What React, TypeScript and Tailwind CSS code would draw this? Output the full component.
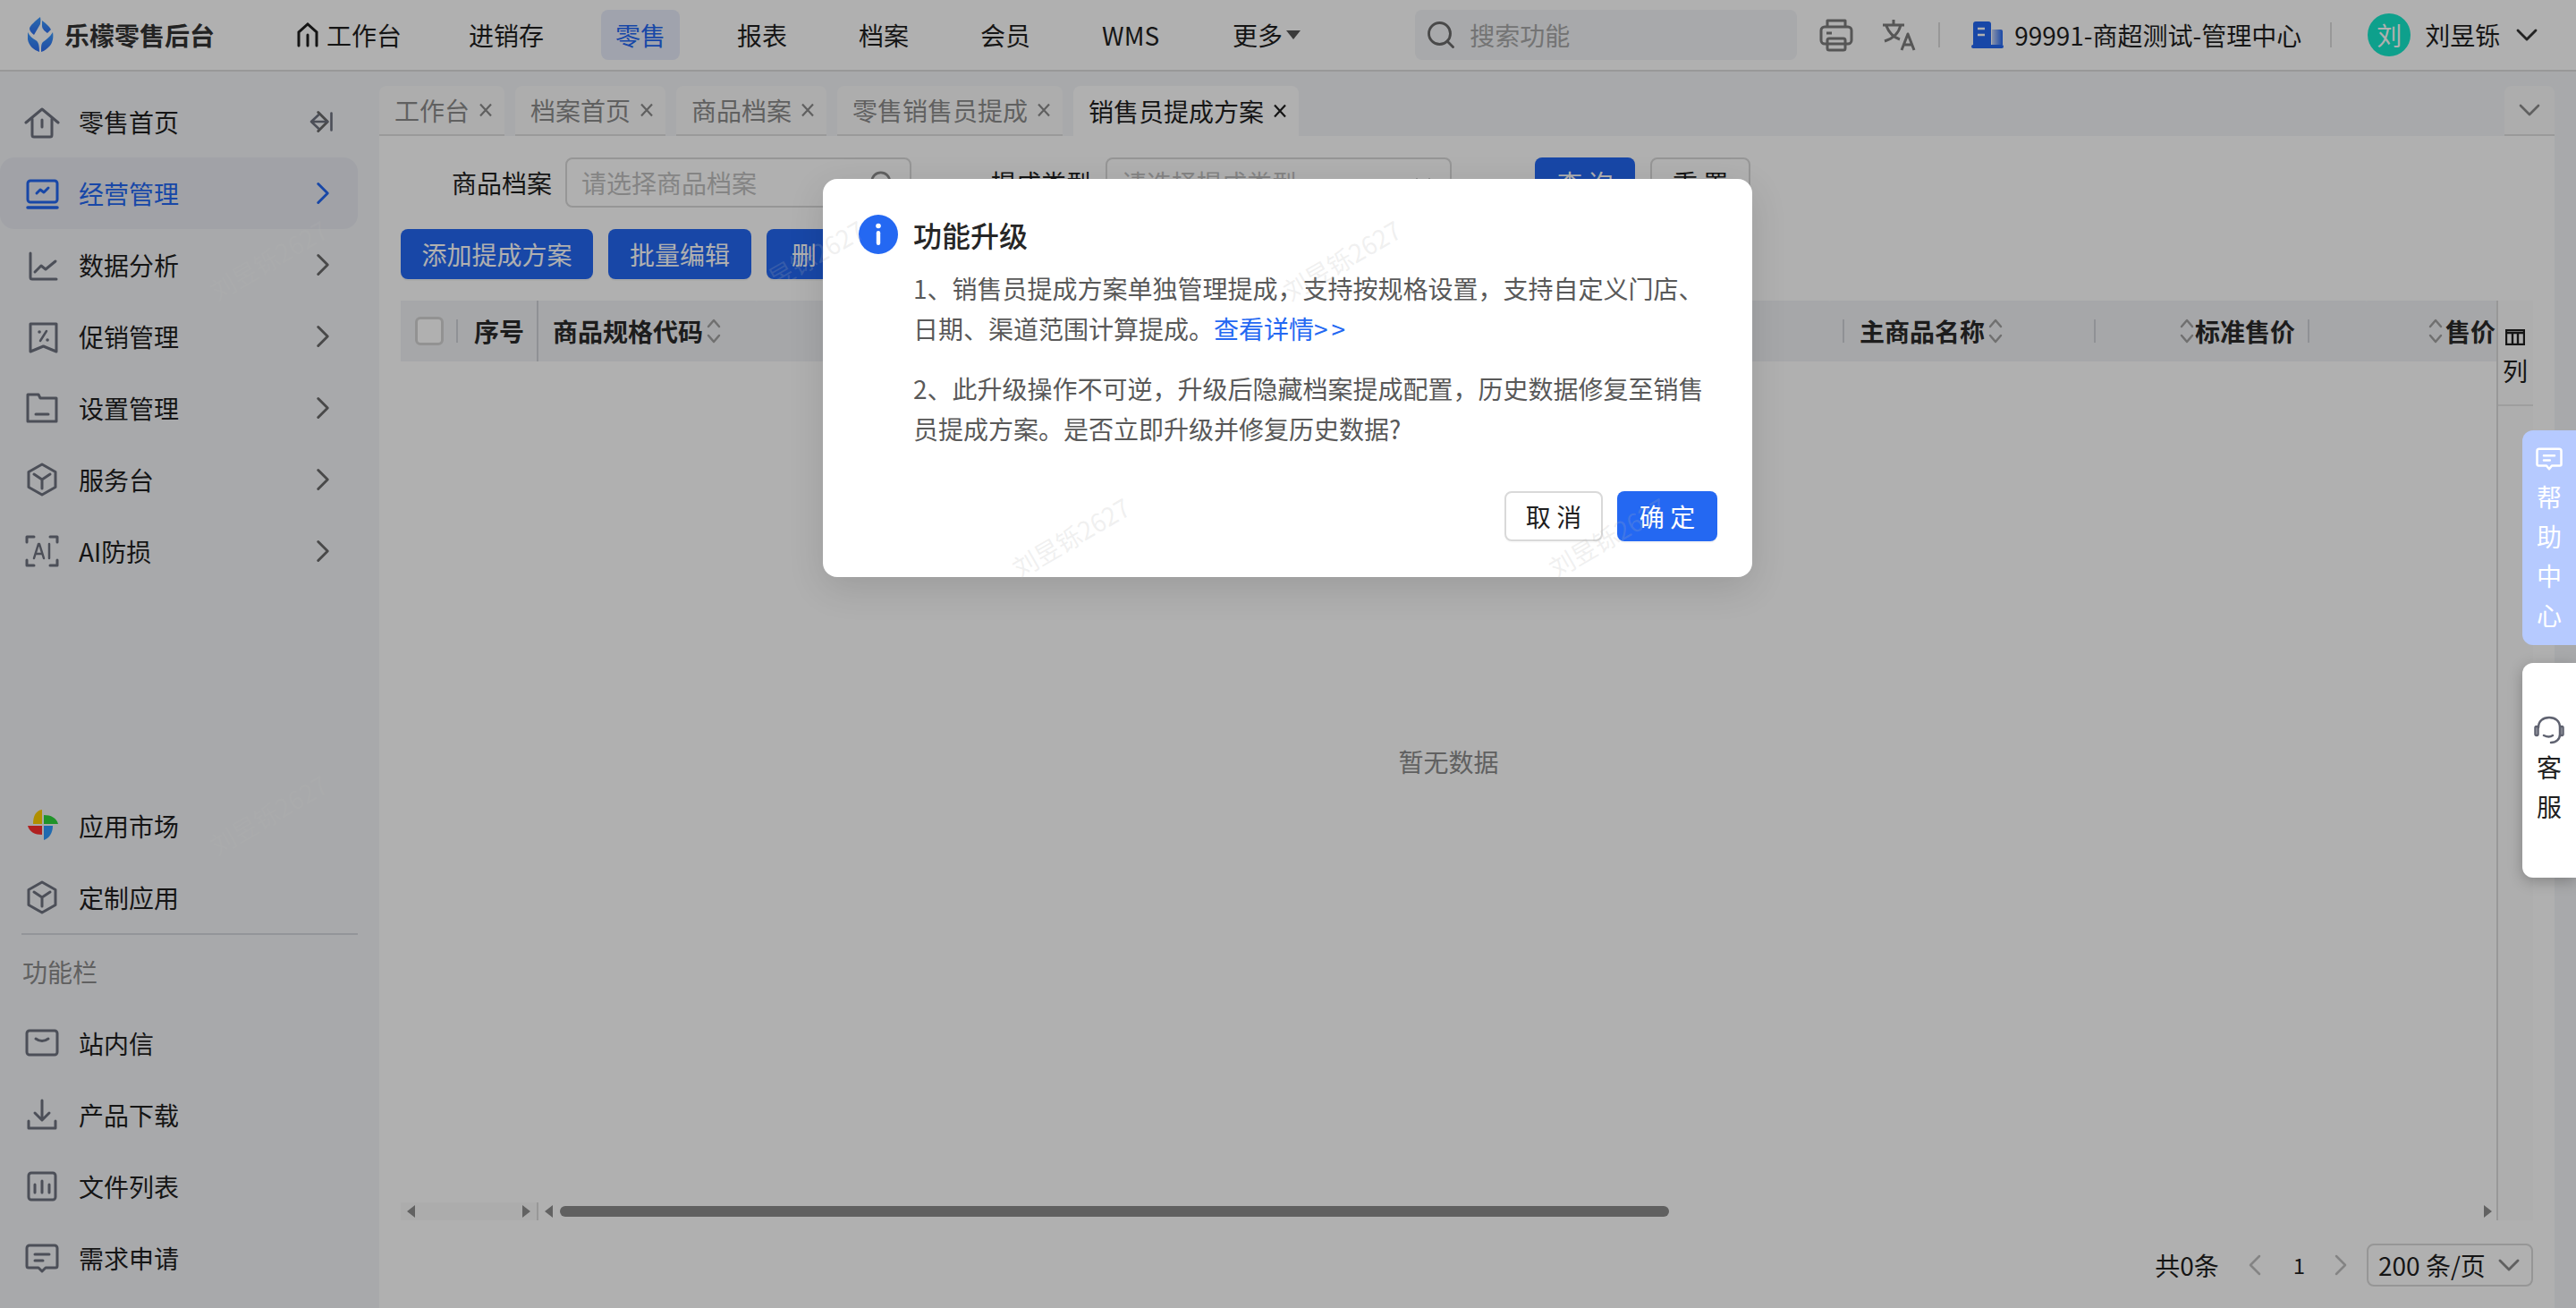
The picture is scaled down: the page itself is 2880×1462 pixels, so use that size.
import { ChevronDown, ChevronLeft, ChevronRight, Search } from 'lucide-react';
import type { ReactNode } from 'react';

const FONT = '[font-family:"Noto_Sans_CJK_SC","Noto_Sans",sans-serif]';
const STROKE = '#6f7380';

function Ico({ children, color = STROKE }: { children: ReactNode; color?: string }) {
  return (
    <svg width="40" height="40" viewBox="0 0 40 40" fill="none" stroke={color} strokeWidth="3" strokeLinecap="round" strokeLinejoin="round">
      {children}
    </svg>
  );
}

const icons: Record<string, ReactNode> = {
  home: (
    <Ico>
      <path d="M2 21 20 6l18 15" />
      <path d="M9 17v18a2 2 0 0 0 2 2h18a2 2 0 0 0 2-2V17" />
      <path d="M20 18v8" />
    </Ico>
  ),
  manage: (
    <Ico color="#2468f2">
      <rect x="4" y="6" width="33" height="24" rx="3" />
      <path d="M4 36h33" strokeWidth="3.500" />
      <path d="M14 20l4-4 4 3 5-5" />
    </Ico>
  ),
  chart: (
    <Ico>
      <path d="M7 7v27a2 2 0 0 0 2 2h27" />
      <path d="M12 28l7-7 5 4 11-9" />
    </Ico>
  ),
  promo: (
    <Ico>
      <path d="M7 6h29v31l-14.500-6L7 37z" />
      <path d="M25 14l-7 11" strokeWidth="2.500" />
      <path d="M17 15h.1M26 24h.1" strokeWidth="3.500" />
    </Ico>
  ),
  folder: (
    <Ico>
      <path d="M4 5h12l2 4h18v26H4z" />
      <path d="M13 27h14" />
    </Ico>
  ),
  cube: (
    <Ico>
      <path d="M20 3l15 8.500v17L20 37 5 28.500v-17z" />
      <path d="M11 14l9 6 9-6M20 20v10" />
    </Ico>
  ),
  ai: (
    <Ico>
      <path d="M3 10V4h8M37 10V4h-8M3 30v6h8M37 30v6h-8" />
      <path d="M11 28l5-16h1l5 16M13 23h7M28 12v16" strokeWidth="2.500" />
    </Ico>
  ),
  mail: (
    <Ico>
      <rect x="3" y="6" width="34" height="27" rx="3" />
      <path d="M13 15q7 5 14 0" />
    </Ico>
  ),
  download: (
    <Ico>
      <path d="M20 4v21M12 18l8 8 8-8" />
      <path d="M5 27v8h30v-8" />
    </Ico>
  ),
  file: (
    <Ico>
      <rect x="5" y="5" width="30" height="30" rx="3" />
      <path d="M12 18v9M20 14v13M28 18v9" />
    </Ico>
  ),
  feedback: (
    <Ico>
      <path d="M6 6h28a3 3 0 0 1 3 3v20a2 2 0 0 1-2 2H24l-4 4-4-4H5a2 2 0 0 1-2-2V9a3 3 0 0 1 3-3z" />
      <path d="M12 16h16M12 23h9" />
    </Ico>
  ),
  market: (
    <svg width="40" height="40" viewBox="0 0 40 40">
      <path d="M20 2C13 3 10 9 10 18h10z" fill="#ffd000" />
      <path d="M22 8c8 0 14 3 16 10H22z" fill="#2fd63c" />
      <path d="M4 20h16v10C12 30 6 27 4 20z" fill="#ff2f2f" />
      <path d="M22 20h10c0 8-4 14-10 16z" fill="#2f9aff" />
    </svg>
  ),
};

const topMenus = [
  { icon: 'home', label: '零售首页' },
  { icon: 'manage', label: '经营管理', active: true },
  { icon: 'chart', label: '数据分析' },
  { icon: 'promo', label: '促销管理' },
  { icon: 'folder', label: '设置管理' },
  { icon: 'cube', label: '服务台' },
  { icon: 'ai', label: 'AI防损' },
];

const tabs = [
  { label: '工作台' },
  { label: '档案首页' },
  { label: '商品档案' },
  { label: '零售销售员提成' },
  { label: '销售员提成方案', active: true },
];

function SideItem({ icon, label, active, arrow }: { icon: string; label: string; active?: boolean; arrow?: boolean }) {
  return (
    <div className={`flex items-center h-20 w-[400px] pl-[27px] rounded-[16px] ${active ? 'bg-[#e9ebf2] text-[#2468f2]' : 'text-[#1f1f1f]'}`}>
      <span className="w-[40px] h-[40px] shrink-0">{icons[icon]}</span>
      <span className="ml-[21px] text-[28px]">{label}</span>
      {arrow && <ChevronRight size={42} strokeWidth={1.700} className={`ml-auto mr-[18px] ${active ? 'text-[#2468f2]' : 'text-[#6b6b6b]'}`} />}
    </div>
  );
}

function Sort() {
  return (
    <svg width="18" height="30" viewBox="0 0 18 30" fill="none" stroke="#a3a3a3" strokeWidth="2.500" strokeLinecap="round" strokeLinejoin="round" className="shrink-0">
      <path d="M3 10l6-7 6 7M3 20l6 7 6-7" />
    </svg>
  );
}

function Sep() {
  return <span className="block w-[2px] h-[26px] bg-[#cfd2d8] shrink-0" />;
}

function Tri({ dir }: { dir: 'l' | 'r' }) {
  return (
    <svg width="10" height="14" viewBox="0 0 10 14" fill="#8f8f8f" className="shrink-0">
      <path d={dir === 'l' ? 'M10 0v14L1 7z' : 'M0 0v14l9-7z'} />
    </svg>
  );
}

function TabClose() {
  return (
    <svg width="16" height="16" viewBox="0 0 16 16" fill="none" stroke="currentColor" strokeWidth="2.200" className="shrink-0">
      <path d="M2 1.500l12 13M14 1.500l-12 13" />
    </svg>
  );
}

function Watermarks() {
  const rows = [290, 600, 910, 1220];
  return (
    <div className="absolute inset-0 overflow-hidden pointer-events-none z-40">
      {rows.map((y, r) =>
        [0, 1, 2, 3, 4]
          .map((c) => c * 600 + (r % 2 === 0 ? 300 : 597))
          .filter((x) => x < 2800)
          .map((x) => (
            <span
              key={`${y}-${x}`}
              className="absolute text-[28px] text-[#b4b4b4]/20 -rotate-[30deg] whitespace-nowrap -translate-x-1/2 -translate-y-1/2"
              style={{ left: x, top: y }}
            >
              刘昱铄2627
            </span>
          )),
      )}
    </div>
  );
}

export default function App() {
  return (
    <div className={`relative w-[2880px] h-[1462px] overflow-hidden bg-white flex flex-col text-[#1f1f1f] ${FONT}`}>
      {/* header */}
      <header className="h-20 shrink-0 flex items-center bg-white border-b-2 border-[#dcdcdc]">
        <div className="w-[316px] shrink-0 pl-[30px] flex items-center">
          <svg width="30" height="40" viewBox="0 0 30 40">
            <defs>
              <linearGradient id="lg" x1="0" y1="0" x2="0" y2="1">
                <stop offset="0" stopColor="#3d9bff" />
                <stop offset="1" stopColor="#2f6ff0" />
              </linearGradient>
            </defs>
            <path d="M15 0C16 4 15 6 15 8L8 20C5 18 3 15 3 13 3 10 10 4 15 0z" fill="url(#lg)" />
            <path d="M17 4c4 3 8 6 10 10l-4 4c-3-2-6-5-6-8z" fill="url(#lg)" />
            <path d="M1 17c2 4 5 7 9 9 3 2 4 5 4 13C8 37 2 32 1 25z" fill="url(#lg)" />
            <path d="M29 17c1 5 0 11-3 15-3 3-6 6-10 7 0-6 0-9 2-11 4-3 8-6 11-11z" fill="url(#lg)" />
          </svg>
          <span className="ml-3 text-[28px] font-bold text-[#333]">乐檬零售后台</span>
        </div>
        <nav className="flex items-center gap-12 text-[28px]">
          <div className="flex items-center pl-4 pr-[11px] h-14">
            <svg width="24" height="30" viewBox="0 0 24 30" fill="none" stroke="#1f1f1f" strokeWidth="3" strokeLinecap="round" className="mr-[9px]">
              <path d="M2 27V12L12 3l10 9v15" />
              <path d="M12 15v12" />
            </svg>
            工作台
          </div>
          <div className="px-4">进销存</div>
          <div className="px-4 h-14 flex items-center rounded-lg bg-[#e8edfb] text-[#2468f2]">零售</div>
          <div className="px-4">报表</div>
          <div className="px-4">档案</div>
          <div className="px-4">会员</div>
          <div className="px-4">WMS</div>
          <div className="pl-[18px] flex items-center">
            更多
            <svg width="16" height="12" viewBox="0 0 16 12" fill="#555" className="ml-1">
              <path d="M0 1h16L8 11z" />
            </svg>
          </div>
        </nav>
        <div className="ml-[128px] w-[427px] h-14 shrink-0 rounded-lg bg-[#f3f5f8] flex items-center pl-[11px] text-[28px] text-[#a8a8a8]">
          <Search size={36} strokeWidth={1.900} className="text-[#6b6b6b] mr-[14px]" />
          搜索功能
        </div>
        <svg width="40" height="40" viewBox="0 0 40 40" fill="none" stroke="#7d7d7d" strokeWidth="3" strokeLinejoin="round" className="ml-[24px] shrink-0">
          <path d="M10 11V4h20v7" />
          <rect x="3" y="11" width="34" height="19" rx="4" />
          <rect x="10" y="24" width="20" height="13" rx="2" />
          <path d="M9 18h6" />
        </svg>
        <svg width="40" height="38" viewBox="0 0 40 38" fill="none" stroke="#7d7d7d" strokeWidth="3" strokeLinejoin="round" className="ml-[30px] shrink-0">
          <path d="M2 8h24M14 2v6M22 8c-2 8-8 15-18 18M6 9c3 8 9 13 15 15M23 36l7-18 7 18M26 30h8" />
        </svg>
        <span className="ml-[24px] w-[2px] h-7 bg-[#dcdcdc]" />
        <svg width="36" height="30" viewBox="0 0 36 30" className="ml-[35px] shrink-0">
          <defs>
            <linearGradient id="bl" x1="0" y1="0" x2="1" y2="0">
              <stop offset="0" stopColor="#c9d6f5" />
              <stop offset="1" stopColor="#2468f2" />
            </linearGradient>
          </defs>
          <path d="M2 3a3 3 0 0 1 3-3h14a3 3 0 0 1 3 3v23H2z" fill="#2468f2" />
          <path d="M7 8h8M7 15h8" stroke="#fff" strokeWidth="2.500" />
          <path d="M23 9h10a2 2 0 0 1 2 2v15H23z" fill="url(#bl)" />
          <rect x="0" y="26" width="36" height="4" rx="2" fill="#2468f2" />
        </svg>
        <span className="ml-[12px] text-[28px] whitespace-nowrap">99991-商超测试-管理中心</span>
        <span className="ml-[32px] w-[2px] h-7 bg-[#dcdcdc]" />
        <span className="ml-[40px] w-12 h-12 shrink-0 rounded-full bg-[#15e8cb] text-white text-[28px] flex items-center justify-center">刘</span>
        <span className="ml-4 text-[28px] whitespace-nowrap">刘昱铄</span>
        <ChevronDown size={40} strokeWidth={1.700} className="ml-[10px] text-[#333]" />
      </header>

      <div className="flex-1 flex min-h-0">
        {/* sidebar */}
        <aside className="relative w-[424px] shrink-0 bg-[#f3f5f8] flex flex-col pt-4 pb-4">
          {topMenus.map((m) => (
            <SideItem key={m.label} icon={m.icon} label={m.label} active={m.active} arrow />
          ))}
          <svg width="26" height="22" viewBox="0 0 26 22" fill="none" stroke={STROKE} strokeWidth="2.600" strokeLinecap="round" strokeLinejoin="round" className="absolute left-[346px] top-[45px]">
            <path d="M24.500 1.500v19M10 3.500 2 11l8 7.500M2 11h18" />
          </svg>
          <div className="mt-auto">
            <SideItem icon="market" label="应用市场" />
            <SideItem icon="cube" label="定制应用" />
            <div className="ml-6 w-[376px] h-[2px] bg-[#d6d8de]" />
            <div className="h-[81px] flex items-center pl-[25px] text-[28px] text-[#8c8c8c]">功能栏</div>
            <SideItem icon="mail" label="站内信" />
            <SideItem icon="download" label="产品下载" />
            <SideItem icon="file" label="文件列表" />
            <SideItem icon="feedback" label="需求申请" />
          </div>
        </aside>

        <main className="flex-1 min-w-0 bg-[#f3f5f8] flex flex-col">
          {/* tabs */}
          <div className="h-[72px] shrink-0 pt-4 flex text-[28px] pr-6">
            <div className="flex gap-3">
              {tabs.map((t) => (
                <div
                  key={t.label}
                  className={`h-14 pl-[17px] pr-[13px] rounded-t-lg flex items-center gap-[10px] ${t.active ? 'bg-white text-[#1f1f1f]' : 'bg-[#fbfbfb] border-b-2 border-[#e0e0e0] text-[#8c8c8c]'}`}
                >
                  {t.label}
                  <TabClose />
                </div>
              ))}
            </div>
            <div className="ml-auto w-14 h-14 rounded-t-lg bg-[#fbfbfb] border-b-2 border-[#e0e0e0] flex items-center justify-center">
              <ChevronDown size={40} strokeWidth={1.600} className="text-[#8c8c8c]" />
            </div>
          </div>

          {/* panel */}
          <div className="flex-1 min-h-0 mr-6 bg-white pt-6 pl-6 pr-6 flex flex-col text-[28px]">
            <div className="h-14 shrink-0 flex items-center">
              <span className="ml-[57px] mr-[15px]">商品档案</span>
              <div className="w-[387px] h-14 border-2 border-[#d9d9d9] rounded-lg flex items-center pl-4 pr-[16px] text-[#bfbfbf]">
                请选择商品档案
                <Search size={30} strokeWidth={2.200} className="ml-auto text-[#8c8c8c]" />
              </div>
              <span className="ml-[89px] mr-[16px]">提成类型</span>
              <div className="w-[387px] h-14 border-2 border-[#d9d9d9] rounded-lg flex items-center pl-4 pr-[16px] text-[#bfbfbf]">
                请选择提成类型
                <ChevronDown size={28} className="ml-auto text-[#8c8c8c]" />
              </div>
              <button className="ml-[93px] w-[112px] h-14 rounded-lg bg-[#2468f2] text-white">查 询</button>
              <button className="ml-[17px] w-[112px] h-14 rounded-lg border-2 border-[#d9d9d9] bg-white">重 置</button>
            </div>

            <div className="mt-6 h-14 shrink-0 flex gap-[17px] text-white">
              <button className="w-[215px] rounded-lg bg-[#2468f2] shadow-[0_2px_0_rgba(0,0,0,0.04)]">添加提成方案</button>
              <button className="w-[160px] rounded-lg bg-[#2468f2] shadow-[0_2px_0_rgba(0,0,0,0.04)]">批量编辑</button>
              <button className="w-[118px] rounded-lg bg-[#2468f2] shadow-[0_2px_0_rgba(0,0,0,0.04)]">删 除</button>
            </div>

            {/* table */}
            <div className="mt-6 h-[1028px] shrink-0 flex">
              <div className="w-[2343px] shrink-0 flex flex-col">
                <div className="h-[68px] shrink-0 flex items-center bg-[#f1f2f5] font-bold text-[#2a2a2a]">
                  <div className="w-[152px] h-full shrink-0 flex items-center pl-4">
                    <span className="w-8 h-8 rounded-[6px] border-[3px] border-[#d4d4d4] bg-white shrink-0" />
                    <span className="ml-[14px] flex"><Sep /></span>
                    <span className="ml-[18px]">序号</span>
                  </div>
                  <div className="w-[1460px] h-full shrink-0 border-l-2 border-[#cfd2d8] flex items-center pl-4">
                    商品规格代码
                    <span className="ml-[3px] flex"><Sort /></span>
                  </div>
                  <div className="w-[281px] shrink-0 flex items-center">
                    <Sep />
                    <span className="ml-[17px]">主商品名称</span>
                    <span className="ml-[3px] flex"><Sort /></span>
                  </div>
                  <div className="w-[239px] shrink-0 flex items-center justify-end">
                    <Sep />
                    <span className="ml-auto flex"><Sort /></span>
                    <span className="mr-[14px]">标准售价</span>
                  </div>
                  <div className="flex-1 flex items-center justify-end">
                    <Sep />
                    <span className="ml-auto flex"><Sort /></span>
                    <span className="ml-[2px] mr-[1px]">售价</span>
                  </div>
                </div>
                <div className="flex-1 min-h-0 flex items-center justify-center pb-[46px] text-[#8c8c8c]">暂无数据</div>
                <div className="h-5 shrink-0 flex items-center">
                  <div className="w-[152px] h-full shrink-0 bg-[#fafafa] flex items-center justify-between px-[6px]">
                    <Tri dir="l" />
                    <Tri dir="r" />
                  </div>
                  <span className="w-[2px] h-full bg-[#dcdcdc] shrink-0" />
                  <div className="flex-1 flex items-center pl-[6px] pr-[4px]">
                    <Tri dir="l" />
                    <span className="ml-[8px] w-[1240px] h-3 rounded-full bg-[#8c8c8c]" />
                    <span className="ml-auto flex"><Tri dir="r" /></span>
                  </div>
                </div>
              </div>
              <div className="flex-1 min-w-0 border-l-2 border-[#dcdcdc] bg-[#fcfcfc] flex flex-col">
                <div className="h-[118px] border-b-2 border-[#e5e5e5] pl-[8px] pt-[32px]">
                  <svg width="22" height="18" viewBox="0 0 22 18" fill="none" stroke="#1f1f1f" strokeWidth="2.400">
                    <rect x="1" y="1" width="20" height="16" />
                    <path d="M1 4h20M8 4v13M14 4v13" />
                  </svg>
                  <div className="mt-[6px] leading-[44px] -ml-[3px]">列</div>
                </div>
              </div>
            </div>

            {/* pagination */}
            <div className="mt-[26px] h-12 shrink-0 flex items-center justify-end">
              <span>共0条</span>
              <ChevronLeft size={40} strokeWidth={1.500} className="ml-[20px] text-[#bfbfbf]" />
              <span className="ml-[23px] text-[24px]">1</span>
              <ChevronRight size={40} strokeWidth={1.500} className="ml-[20px] text-[#bfbfbf]" />
              <div className="ml-[9px] w-[186px] h-12 rounded-lg border-2 border-[#d9d9d9] flex items-center pl-[11px] pr-[5px] whitespace-nowrap">
                200 条/页
                <ChevronDown size={40} strokeWidth={1.700} className="ml-auto text-[#8c8c8c]" />
              </div>
            </div>
          </div>
        </main>
      </div>

      {/* modal mask */}
      <div className="absolute inset-0 bg-black/[0.31] z-10" />

      {/* dialog */}
      <div className="absolute left-[920px] top-[200px] z-20 w-[1039px] h-[445px] bg-white rounded-[16px] shadow-[0_12px_40px_rgba(0,0,0,0.12)] flex flex-col pt-10 pl-10 pr-[39px] pb-10">
        <div className="flex items-center h-11">
          <svg width="44" height="44" viewBox="0 0 44 44" className="shrink-0">
            <circle cx="22" cy="22" r="22" fill="#2468f2" />
            <circle cx="22" cy="12.500" r="2.800" fill="#fff" />
            <rect x="19.800" y="18" width="4.400" height="16" rx="2.200" fill="#fff" />
          </svg>
          <span className="ml-[17px] text-[32px] font-medium leading-none text-[#262626]">功能升级</span>
        </div>
        <div className="pl-[61px] mt-4 text-[28px] leading-[45px] text-[#595959] whitespace-nowrap">
          <p>1、销售员提成方案单独管理提成，支持按规格设置，支持自定义门店、</p>
          <p>
            日期、渠道范围计算提成。<span className="text-[#2468f2]">查看详情<span className="tracking-[4px]">&gt;&gt;</span></span>
          </p>
          <p className="mt-[22px]">2、此升级操作不可逆，升级后隐藏档案提成配置，历史数据修复至销售</p>
          <p>员提成方案。是否立即升级并修复历史数据?</p>
        </div>
        <div className="mt-auto flex justify-end gap-4 text-[28px]">
          <button className="w-[110px] h-14 rounded-lg border-2 border-[#d9d9d9] bg-white text-[#1f1f1f] shadow-[0_2px_0_rgba(0,0,0,0.02)]">取 消</button>
          <button className="w-[112px] h-14 rounded-lg bg-[#2468f2] text-white shadow-[0_2px_0_rgba(0,0,0,0.04)]">确 定</button>
        </div>
      </div>

      {/* side floats */}
      <div className="absolute right-0 top-[481px] z-20 w-[60px] h-[240px] rounded-l-[12px] bg-[#b6caff] text-white flex flex-col items-center pt-[18px]">
        <svg width="30" height="28" viewBox="0 0 40 36" fill="none" stroke="#fff" strokeWidth="3.400" strokeLinejoin="round" strokeLinecap="round">
          <path d="M5 3h30a3 3 0 0 1 3 3v20a2 2 0 0 1-2 2H24l-4 5-4-5H4a2 2 0 0 1-2-2V6a3 3 0 0 1 3-3z" />
          <path d="M12 13h16M12 20h9" />
        </svg>
        <div className="mt-[6px] text-[28px] leading-[44px] w-7 text-center">帮助中心</div>
      </div>
      <div className="absolute right-0 top-[741px] z-20 w-[60px] h-[240px] rounded-l-[12px] bg-white shadow-[0_4px_16px_rgba(0,0,0,0.25)] flex flex-col items-center pt-[58px] text-[#1f1f1f]">
        <svg width="34" height="34" viewBox="0 0 34 34" fill="none" stroke="#5f6270" strokeWidth="2.500" strokeLinecap="round">
          <path d="M5 14C5 7 10 3 17 3s12 4 12 11v8c0 5-4 9-10 9" />
          <path d="M11 23q6 3 10 0" />
          <rect x="1.500" y="13" width="3" height="10" rx="1.500" />
          <rect x="29.500" y="13" width="3" height="10" rx="1.500" />
        </svg>
        <div className="mt-[2px] text-[28px] leading-[44px] w-7 text-center">客服</div>
      </div>

      <Watermarks />
    </div>
  );
}
